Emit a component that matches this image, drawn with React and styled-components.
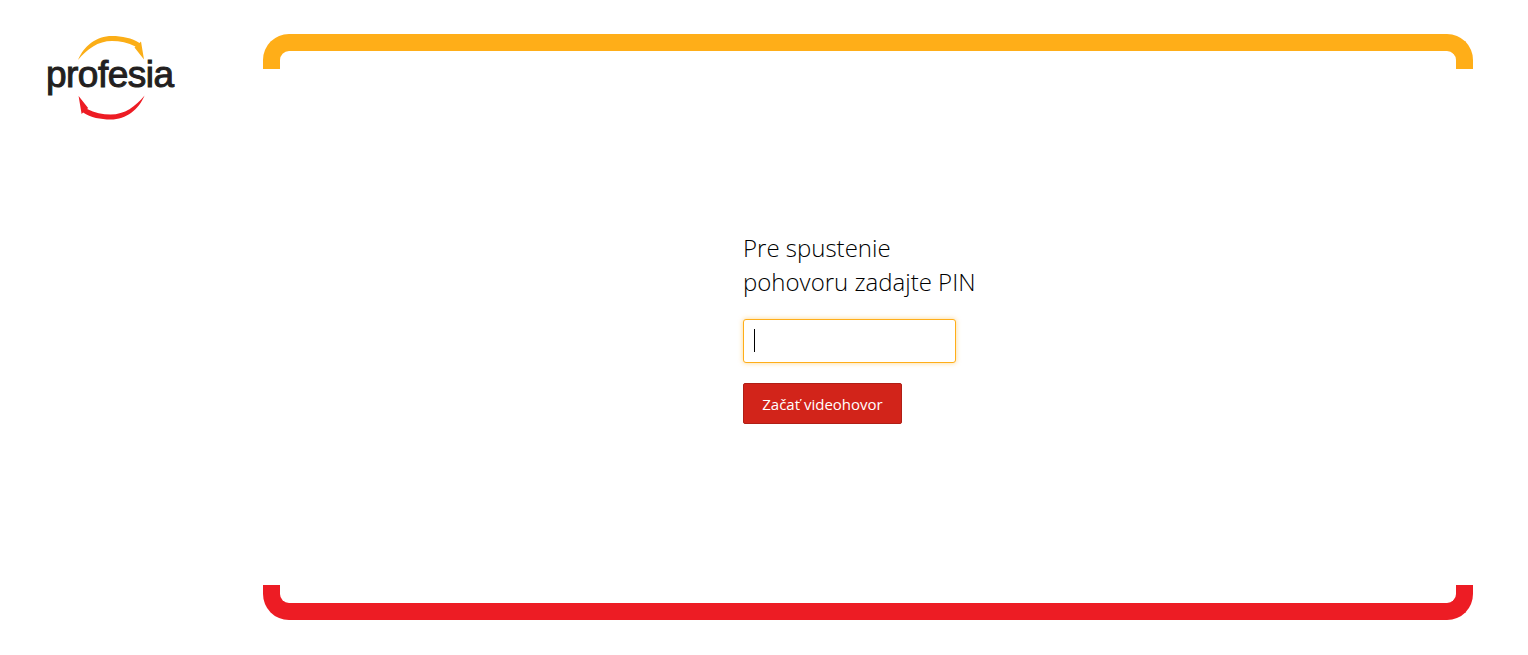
import React from "react";
import styled, { createGlobalStyle } from "styled-components";

const GlobalStyle = createGlobalStyle`
  html, body {
    margin: 0;
    padding: 0;
    background: #fff;
    font-family: "Open Sans", "Liberation Sans", sans-serif;
  }
  * {
    box-sizing: border-box;
  }
`;

const Page = styled.div`
  display: flex;
  height: 655px;
  overflow: hidden;
  padding: 34px 55px 35px 0;
`;

const Sidebar = styled.aside`
  width: 263px;
  flex-shrink: 0;
`;

const LogoBox = styled.div`
  margin-top: -34px;
`;

const Frame = styled.main`
  flex: 1;
  display: flex;
  flex-direction: column;
  justify-content: space-between;
`;

const Bracket = styled.div`
  height: 35px;
  border: 17px solid ${(props) => props.color};
  border-radius: ${(props) => (props.$bottom ? "0 0 26px 26px" : "26px 26px 0 0")};
  border-top-width: ${(props) => (props.$bottom ? 0 : "17px")};
  border-bottom-width: ${(props) => (props.$bottom ? "17px" : 0)};
`;

const Content = styled.div`
  flex: 1;
  padding: 162px 0 0 480px;
`;

const Title = styled.h1`
  margin: 0 0 20px;
  font-size: 24px;
  line-height: 34px;
  font-weight: 300;
  color: #000;
`;

const InputWrap = styled.div`
  position: relative;
  width: 213px;
  margin-bottom: 20px;
`;

const PinInput = styled.input`
  display: block;
  width: 100%;
  height: 44px;
  padding: 0 10px;
  border: 1px solid #ffae18;
  border-radius: 3px;
  outline: none;
  background: #fff;
  box-shadow: 0 0 5px rgba(255, 174, 24, 0.5);
  caret-color: transparent;
  font: 400 16px "Open Sans", sans-serif;
`;

const Caret = styled.span`
  position: absolute;
  left: 11px;
  top: 10px;
  width: 1px;
  height: 23px;
  background: #000;
`;

const Button = styled.button`
  display: block;
  width: 159px;
  height: 41px;
  padding: 0;
  border: 1px solid #b01f16;
  border-radius: 2px;
  background: #d2241a;
  color: #fff;
  font: 400 15px "Open Sans", sans-serif;
`;

const ARC =
  "M78 60 C84 46 96 36 112 36 C122 36 132 38 139.5 43 L141 41.5 L144 59.5 L134.5 47.5 L135.5 46.5 C128 42.5 120 41 112 41 C98 41 87 49 78 60 Z";

const Logo = () => (
  <svg width="263" height="130" viewBox="0 0 263 130" display="block">
    <path d={ARC} fill="#fbae17" />
    <path d={ARC} fill="#ed1c24" transform="rotate(180 111.3 77.7)" />
    <text
      x="46"
      y="87"
      fontFamily="Liberation Sans, sans-serif"
      fontWeight="400"
      fontSize="37"
      textLength="128"
      lengthAdjust="spacing"
      fill="#231f20"
      stroke="#231f20"
      strokeWidth="1"
    >
      profesia
    </text>
  </svg>
);

const App = () => {
  return (
    <Page>
      <GlobalStyle />
      <Sidebar>
        <LogoBox>
          <Logo />
        </LogoBox>
      </Sidebar>
      <Frame>
        <Bracket color="#ffae18" />
        <Content>
          <Title>
            Pre spustenie
            <br />
            pohovoru zadajte PIN
          </Title>
          <InputWrap>
            <PinInput type="text" aria-label="PIN" />
            <Caret />
          </InputWrap>
          <Button type="button">Začať videohovor</Button>
        </Content>
        <Bracket $bottom color="#ed1c24" />
      </Frame>
    </Page>
  );
};

export default App;
